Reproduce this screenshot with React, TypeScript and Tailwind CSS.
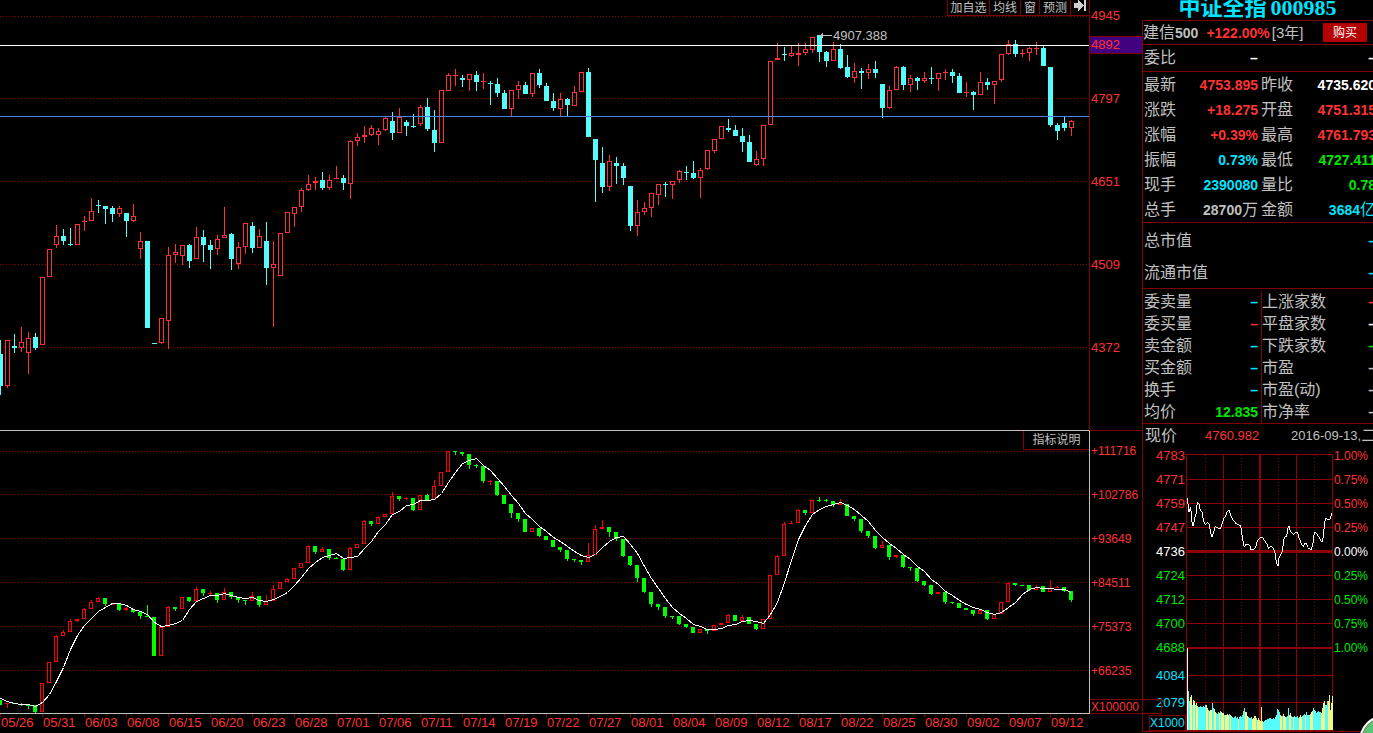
import React from 'react';

type Candle = { up: boolean; high: number; top: number; bottom: number; low: number };

const parse = (rows: string): Candle[] =>
  rows
    .trim()
    .split(/\s+/)
    .map((row) => {
      const [high, top, bottom, low] = row.slice(1).split(',').map(Number);
      return { up: row[0] === 'u', high, top, bottom, low };
    });

// u = rising, d = falling; high, body top, body bottom, low on the pane's vertical scale
const PRICE = parse(`
d340,354,386,395 u340,340,386,388 d334,346,348,353 u327,342,348,352 u332,338,353,374 d333,337,348,350
u277,277,345,345 u249,249,277,277 u225,236,245,248 d229,236,241,245 d228,244,245,246 u224,224,245,245
u216,221,222,231 u198,211,221,221 d200,205,206,213 d206,206,209,224 d206,208,214,222 u206,208,214,217
d213,213,221,237 u204,216,221,222 u232,241,249,259 d241,241,328,328 d343,343,344,344 u318,318,343,344
u247,255,321,349 u244,252,255,263 u245,245,256,265 d244,245,261,268 u227,237,259,259 d230,237,245,262
d240,245,250,269 u235,239,249,255 u207,235,238,238 d233,234,259,270 u242,247,264,269 u223,223,247,254
d222,226,248,253 u229,236,248,248 d222,241,268,285 u241,264,268,327 u233,233,276,276 u212,212,233,233
u207,207,214,227 u188,190,207,212 u175,184,190,191 u177,181,183,190 d172,180,188,190 u175,180,188,190
u166,178,179,179 d175,178,183,190 u140,141,184,199 u133,137,141,146 u126,135,137,143 u125,128,135,136
u128,131,135,145 u117,118,130,131 d112,121,133,140 u108,117,133,133 d120,122,126,136 d114,126,127,128
u105,107,124,126 d98,107,129,131 d110,130,143,152 u90,90,143,143 u73,75,91,91 u69,75,76,86
d75,78,80,87 u74,74,80,91 d71,75,82,91 u73,81,82,89 d81,83,84,105 d78,84,93,97
d90,93,109,109 u90,90,109,116 u81,85,90,99 d82,85,94,94 u73,73,94,97 d69,73,85,88
d83,86,101,101 d93,101,108,111 u93,99,109,116 d98,99,105,116 u86,92,106,106 u72,72,92,92
d68,72,137,137 d139,139,160,202 d147,163,187,193 u155,161,187,191 d157,163,166,184 d163,166,178,185
d186,186,226,231 u200,212,226,236 u202,208,212,215 u193,193,208,217 u184,184,195,205 d182,184,185,197
u181,181,185,199 u170,171,180,183 d166,172,173,180 d161,173,178,179 u168,170,178,198 u150,150,169,170
u139,139,151,153 u126,126,139,139 d119,128,130,132 d125,130,136,136 d128,136,142,152 d135,142,162,162
u151,159,165,166 u125,125,159,166 u61,61,125,125 u43,58,60,60 d47,54,55,61 u46,53,56,57
u43,53,55,66 u43,49,53,55 u37,37,50,53 d35,35,52,62 d51,52,61,67 u42,49,61,61
d44,49,68,69 d55,67,77,78 u63,71,78,83 d68,71,73,89 u64,69,73,79 d61,69,73,78
d84,84,108,118 u86,90,108,109 u66,67,90,90 d66,67,85,90 u75,78,85,92 d77,78,81,90
u72,78,81,83 d67,78,79,84 u73,73,79,91 u69,72,73,80 d69,72,76,83 d73,76,93,93
u82,92,93,97 d91,92,95,110 u72,82,95,95 d78,82,85,90 u81,81,85,104 u54,54,80,82
u40,44,54,55 d40,44,54,57 u49,53,54,57 u47,48,53,61 u42,48,49,55 d46,48,66,66
d67,67,125,127 d123,125,131,140 d117,123,128,131 u120,121,128,136
`);

const INDICATOR = parse(`
d700,700,705,705 u703,703,704,708 d703,703,704,704 d703,704,705,706 d705,705,706,709 d705,705,712,713
u683,683,712,712 u662,662,683,683 u635,636,662,662 u630,632,636,636 u619,621,632,632 u619,619,621,622
u608,609,619,619 u600,602,609,609 u597,598,602,602 d598,598,604,606 u603,604,605,605 d604,604,610,611
u607,608,610,611 d609,609,612,613 d612,612,616,619 d605,616,617,617 d617,617,656,656 u627,627,656,656
u606,607,627,627 d607,607,609,611 u597,597,609,609 d597,597,601,602 u587,589,601,601 d589,589,593,596
u591,593,594,595 d593,593,600,603 u588,592,600,600 d592,592,597,599 d597,597,600,603 d600,600,601,605
u592,596,601,601 d596,596,605,607 u595,601,605,605 u585,589,601,601 u582,582,589,589 u578,579,582,582
u568,568,579,579 u563,563,568,568 u545,546,563,563 d546,546,552,554 u547,549,552,552 d549,549,558,560
d557,558,559,559 d559,559,570,571 u547,548,570,570 u544,544,548,548 u520,521,544,544 d521,521,524,526
u516,517,524,524 u514,514,517,517 u492,496,514,514 d496,496,499,501 u497,498,499,500 d498,498,510,511
u495,495,510,510 d494,495,500,501 u480,486,500,500 u472,472,486,486 u451,451,472,472 d451,451,452,455
d452,452,454,456 d454,454,465,469 d464,465,466,468 d466,466,481,483 u480,481,482,485 d481,481,495,496
d495,495,504,504 d504,504,513,518 d513,513,519,522 d519,519,532,532 u528,528,532,532 d528,528,536,537
d536,536,540,540 d540,540,547,547 d547,547,550,552 d550,550,559,561 d559,559,560,562 d560,560,562,565
u543,555,562,562 u525,529,555,555 u520,527,529,529 d527,527,532,537 d532,532,539,541 d539,539,556,557
d556,556,565,566 d565,565,578,582 d578,578,592,593 d592,592,604,607 d604,604,607,610 d607,607,616,618
d616,616,617,619 d616,616,624,625 d624,624,627,628 d627,627,633,633 u629,629,633,633 d629,629,631,634
u625,625,631,631 u623,623,625,625 u614,615,623,623 d615,615,621,621 u615,617,621,621 d617,617,624,624
d624,624,629,630 u619,619,629,629 u575,575,619,619 u555,556,575,575 u522,524,556,556 u521,523,524,524
u509,510,523,523 d510,510,513,515 u500,500,513,513 d497,500,501,502 d499,500,501,502 d501,501,505,507
u499,503,505,505 d504,504,516,516 d516,516,519,521 d519,519,531,533 d531,531,536,538 d536,536,548,549
u541,545,548,548 d545,545,557,560 u555,555,557,558 d555,555,567,568 d567,567,568,571 d568,568,581,582
d581,581,585,586 d585,585,594,595 u592,592,594,594 d592,592,602,604 d602,602,603,604 d603,603,608,608
d608,608,610,610 d610,610,614,616 u610,610,614,614 d610,610,619,620 u614,614,619,619 u602,602,614,614
u583,583,602,602 d583,583,585,586 d585,585,586,586 d585,585,590,591 u585,587,590,590 d586,586,592,592
u580,588,592,592 u586,587,588,588 d587,587,591,592 d591,591,600,602
`);

const AVERAGE = [
  698, 701, 703, 704, 704, 706, 702, 694, 681, 667, 649, 635, 625, 618, 611, 607, 603, 603, 605, 609, 611, 614,
  622, 626, 625, 623, 620, 609, 601, 598, 595, 595, 593, 595, 597, 598, 597, 600, 601, 599, 596, 592, 585, 577,
  568, 562, 557, 555, 553, 558, 557, 556, 548, 541, 531, 524, 514, 511, 505, 504, 500, 500, 499, 493, 482, 472,
  463, 460, 458, 465, 470, 478, 486, 495, 503, 513, 519, 526, 531, 537, 541, 546, 551, 555, 557, 554, 547, 541,
  537, 536, 544, 553, 566, 578, 588, 598, 607, 613, 618, 624, 626, 629, 629, 628, 625, 624, 621, 620, 621, 623,
  614, 602, 582, 560, 539, 525, 514, 509, 506, 504, 502, 505, 509, 515, 521, 530, 537, 543, 548, 554, 559, 566,
  571, 579, 584, 591, 595, 600, 604, 607, 609, 612, 614, 612, 607, 602, 594, 589, 587, 588, 588, 589, 589, 592,
];

const STEP = 7;

const DATES = [
  '05/26', '05/31', '06/03', '06/08', '06/15', '06/20', '06/23', '06/28', '07/01', '07/06', '07/11', '07/14', '07/19',
  '07/22', '07/27', '08/01', '08/04', '08/09', '08/12', '08/17', '08/22', '08/25', '08/30', '09/02', '09/07', '09/12',
];

// Intraday trace, three units to one pixel
const TRACE =
  '142,220 147,260 152,247 157,300 160,303 164,280 168,268 172,232 177,238 181,255 186,262 191,290 196,298 203,293 208,298 211,318 216,337 221,322 225,305 232,308 241,312 246,298 252,280 257,272 263,257 267,254 271,268 279,285 288,296 302,303 305,320 308,345 313,366 318,358 325,357 331,366 333,374 343,373 348,362 352,346 358,340 366,337 373,345 381,357 386,372 390,366 397,366 401,373 405,385 409,412 414,423 417,400 422,388 427,380 431,345 436,335 440,335 443,310 448,303 451,320 460,328 467,322 473,323 478,342 484,355 490,366 494,354 499,355 503,367 513,375 518,362 522,330 526,320 533,330 541,345 547,352 551,325 553,300 557,278 564,285 570,283 576,265';

const VOLUME = [
  39, 29, 33, 35, 25, 30, 29, 25, 27, 24, 23, 23, 24, 23, 23, 24, 23, 25, 25, 22, 20, 19, 20, 20, 27, 22, 21, 18, 17,
  16, 18, 17, 19, 18, 17, 17, 15, 15, 15, 16, 15, 16, 15, 14, 13, 12, 13, 14, 12, 13, 11, 13, 14, 13, 15, 19, 22, 18,
  18, 14, 13, 12, 12, 13, 11, 12, 14, 14, 12, 10, 12, 10, 9, 23, 9, 8, 9, 10, 10, 11, 11, 12, 12, 11, 11, 12, 11, 13,
  15, 21, 20, 18, 15, 14, 14, 16, 14, 13, 13, 14, 22, 15, 17, 14, 13, 13, 14, 13, 13, 14, 12, 13, 15, 13, 14, 15, 16,
  15, 18, 15, 15, 15, 16, 18, 19, 22, 20, 19, 17, 18, 19, 18, 18, 17, 22, 27, 29, 25, 25, 29, 29, 35, 20, 27, 34,
];
const VOLUME_SIDE =
  'ccyycyycyyccccccccyycyyyccyycccycyyycyyyycycccccccyccccccyyyccccyyyycyyyyyycccccccccccccccccyycyyycccyyccycccccyyycccyccccyyyccccccccyyyycccyyyyy';

function Candles({ data, half, width, up, down }: { data: Candle[]; half: number; width: number; up: string; down: string }) {
  return (
    <g>
      {data.map((c, i) => {
        const x = i * STEP;
        const color = c.up ? up : down;
        const height = c.bottom - c.top;
        const hollow = c.up && height > 2;
        return (
          <g key={i}>
            {c.top > c.high && <rect x={x} y={c.high} width={1} height={c.top - c.high} fill={color} />}
            {c.low > c.bottom && <rect x={x} y={c.bottom} width={1} height={c.low - c.bottom} fill={color} />}
            {hollow ? (
              <rect x={x - half + 0.5} y={c.top + 0.5} width={width - 1} height={height - 1} fill="#000" stroke={color} />
            ) : (
              <rect x={x - half} y={c.top} width={width} height={height} fill={color} />
            )}
          </g>
        );
      })}
    </g>
  );
}

function GridLines({ rows }: { rows: number[] }) {
  return (
    <g stroke="#900000" strokeDasharray="1 2">
      {rows.map((y) => (
        <line key={y} x1={0} x2={1089} y1={y + 0.5} y2={y + 0.5} />
      ))}
    </g>
  );
}

const toolButton = 'h-4 shrink-0 cursor-pointer border-b border-l border-[#800000] bg-black text-xs leading-3 whitespace-nowrap text-[#c0c0c0]';

function PricePane() {
  return (
    <section className="relative h-[430px]">
      <svg className="block h-full w-full" viewBox="0 0 1089 430" preserveAspectRatio="none" shapeRendering="crispEdges" aria-label="K线">
        <GridLines rows={[16, 98, 181, 264, 347]} />
        <Candles data={PRICE} half={2} width={5} up="#ff3232" down="#54fcfc" />
        <rect x={0} y={45} width={1089} height={1} fill="#fff" />
        <rect x={0} y={116} width={1089} height={1} fill="#4882f0" />
        <path d="M819 35h2v-1h1v-1h1v2h9v1h-9v2h-1v-1h-1v-1h-2z" fill="#c0c0c0" />
      </svg>
      <span className="absolute top-[28px] left-[76.5%] text-[13px] leading-4 text-[#c0c0c0]">4907.388</span>
      <nav className="absolute top-0 right-0 flex">
        <button className={toolButton + ' w-[42px]'}>加自选</button>
        <button className={toolButton + ' w-[31px]'}>均线</button>
        <button className={toolButton + ' w-[19px]'}>窗</button>
        <button className={toolButton + ' w-[31px]'}>预测</button>
        <button className={toolButton + ' w-[19px]'} aria-label="下一个">
          <svg className="mx-auto -mt-1 block" width="13" height="11" viewBox="0 0 13 11" shapeRendering="crispEdges">
            <path d="M0 3h4V0l6 5.5L4 11V8H0zM10 0h2v11h-2z" fill="#d0d0d0" />
          </svg>
        </button>
      </nav>
    </section>
  );
}

function IndicatorPane() {
  return (
    <section className="relative h-[284px] border-y border-[#c0c0c0]">
      <svg className="block h-full w-full" viewBox="0 431 1089 282" preserveAspectRatio="none" shapeRendering="crispEdges" aria-label="指标">
        <GridLines rows={[451, 494, 538, 582, 626, 670]} />
        <Candles data={INDICATOR} half={2} width={4} up="#ff0000" down="#00ff00" />
        <polyline points={AVERAGE.map((y, i) => `${i * STEP + 0.5},${y + 0.5}`).join(' ')} fill="none" stroke="#fff" />
      </svg>
      <button className="absolute top-0 right-0 h-[19px] w-[66px] border-b border-l border-[#800000] bg-black text-xs leading-[18px] text-[#c0c0c0]">
        指标说明
      </button>
    </section>
  );
}

function DateAxis() {
  return (
    <ol className="grid h-[19px] grid-cols-[repeat(26,3.8568%)] overflow-hidden text-[13px] leading-[18px] text-[#ff3232]">
      {DATES.map((d) => (
        <li key={d} className="relative pl-px before:absolute before:top-0 before:left-0 before:h-[3px] before:w-px before:bg-[#800000]">
          {d}
        </li>
      ))}
    </ol>
  );
}

function ScaleColumn() {
  return (
    <aside className="relative z-10 text-[#ff3232]">
      <div className="relative h-[430px] border-l border-[#800000] pt-2 pl-px text-[13px] leading-4">
        {['4945', '4797', '4651', '4509', '4372'].map((v) => (
          <div key={v} className="h-[83px]">{v}</div>
        ))}
        <div className="absolute top-9 right-0 left-0 h-[18px] border-y border-[#800000] bg-[#400080] pl-px">4892</div>
      </div>
      <div className="relative h-[284px] border-t border-l border-t-[#800000] border-l-[#c0c0c0] pt-3 pl-px text-xs leading-4">
        {['+111716', '+102786', '+93649', '+84511', '+75373', '+66235'].map((v) => (
          <div key={v} className="h-11">{v}</div>
        ))}
        <div className="absolute bottom-0 left-0 h-[15px] w-[72px] border border-l-0 border-[#800000] pl-px leading-[14px]">X100000</div>
      </div>
    </aside>
  );
}

const RED = 'text-[#ff3232]';
const CYAN = 'text-[#00e4ff]';
const GREEN = 'text-[#00e600]';
const WHITE = 'text-white';
const GREY = 'text-[#c0c0c0]';

type Cell = [label: string, value: string, color: string, unit?: string];

const QUOTES: [Cell, Cell][] = [
  [['最新', '4753.895', RED], ['昨收', '4735.620', WHITE]],
  [['涨跌', '+18.275', RED], ['开盘', '4751.315', RED]],
  [['涨幅', '+0.39%', RED], ['最高', '4761.793', RED]],
  [['振幅', '0.73%', CYAN], ['最低', '4727.411', GREEN]],
  [['现手', '2390080', CYAN], ['量比', '0.78', GREEN]],
  [['总手', '28700', GREY, '万'], ['金额', '3684', CYAN, '亿']],
];

const STATS: [Cell, Cell][] = [
  [['委卖量', '–', CYAN], ['上涨家数', '–', RED]],
  [['委买量', '–', RED], ['平盘家数', '–', WHITE]],
  [['卖金额', '–', CYAN], ['下跌家数', '–', GREEN]],
  [['买金额', '–', CYAN], ['市盈', '–', GREY]],
  [['换手', '–', CYAN], ['市盈(动)', '–', GREY]],
  [['均价', '12.835', GREEN], ['市净率', '–', GREY]],
];

function Value({ cell }: { cell: Cell }) {
  return (
    <td className={'p-0 pr-px text-right text-sm font-bold ' + cell[2]}>
      {cell[1]}
      {cell[3] && <span className="text-base leading-none font-normal">{cell[3]}</span>}
    </td>
  );
}

function Pairs({ rows, rowClass, divider }: { rows: [Cell, Cell][]; rowClass: string; divider?: boolean }) {
  return (
    <table className="w-[233px] table-fixed border-collapse">
      <colgroup>
        <col className="w-[52px]" />
        <col className="w-[64px]" />
        <col className="w-[76px]" />
        <col className="w-[41px]" />
      </colgroup>
      <tbody>
        {rows.map(([a, b]) => (
          <tr key={a[0]} className={rowClass}>
            <th className="p-0 pl-px text-left font-normal whitespace-nowrap">{a[0]}</th>
            <Value cell={a} />
            <td colSpan={2} className="p-0 pl-[2px]">
              <div className={'flex items-center justify-between ' + rowClass + (divider ? ' border-l border-[#800000]' : '')}>
                <span>{b[0]}</span>
                <span className={'text-sm font-bold whitespace-nowrap ' + b[2]}>
                  {b[1]}
                  {b[3] && <span className="text-base leading-none font-normal">{b[3]}</span>}
                </span>
              </div>
            </td>
          </tr>
        ))}
      </tbody>
    </table>
  );
}

const LEFT_SCALE: [string, string][] = [
  ['4783', RED], ['4771', RED], ['4759', RED], ['4747', RED], ['4736', WHITE], ['4724', GREEN], ['4712', GREEN], ['4700', GREEN], ['4688', GREEN],
];
const RIGHT_SCALE: [string, string][] = [
  ['1.00%', RED], ['0.75%', RED], ['0.50%', RED], ['0.25%', RED], ['0.00%', WHITE], ['0.25%', GREEN], ['0.50%', GREEN], ['0.75%', GREEN], ['1.00%', GREEN],
];

function Intraday() {
  return (
    <div className="grid grid-cols-[43px_147px_1fr] text-[13px] leading-4">
      <div className="pt-px text-right">
        {LEFT_SCALE.map(([v, c]) => (
          <div key={v} className={'h-6 pr-px ' + c}>{v}</div>
        ))}
        <div className={'mt-1 h-[27px] pr-px ' + CYAN}>4084</div>
        <div className={'h-5 pr-px ' + CYAN}>2079</div>
        <div className={'ml-1.5 h-4 border border-[#800000] pr-px text-xs leading-[14px] ' + CYAN}>X1000</div>
      </div>
      <svg className="mt-[7px] block h-[277px] w-full" viewBox="0 0 147 277" shapeRendering="crispEdges" aria-label="分时">
        <g fill="#900000">
          {[0, 25, 49, 73, 121, 145, 169, 221, 248, 276].map((y) => (
            <rect key={y} x={0} y={y} width={147} height={1} />
          ))}
          <rect x={0} y={96} width={147} height={3} />
          <rect x={0} y={193} width={147} height={2} />
          {[0, 37, 110, 146].map((x) => (
            <rect key={x} x={x} y={0} width={1} height={277} />
          ))}
          <rect x={73} y={0} width={2} height={277} />
        </g>
        <g stroke="#900000" strokeDasharray="1 2">
          {[19, 55, 92, 128].map((x) => (
            <line key={x} x1={x + 0.5} x2={x + 0.5} y1={1} y2={277} />
          ))}
        </g>
        {VOLUME.map((h, i) => (
          <rect key={i} x={i + 2} y={276 - h} width={1} height={h} fill={VOLUME_SIDE[i] === 'c' ? '#54fcfc' : '#f0f888'} />
        ))}
        <rect x={1} y={194} width={1} height={82} fill="#fff" />
        <g transform="translate(-46 -29) scale(0.33333)">
          <polyline points={TRACE} fill="none" stroke="#fff" strokeWidth={3} />
        </g>
      </svg>
      <div className="pt-px pl-px text-xs leading-4">
        {RIGHT_SCALE.map(([v, c], i) => (
          <div key={i} className={'h-6 ' + c}>{v}</div>
        ))}
      </div>
    </div>
  );
}

function QuotePanel() {
  return (
    <aside className="overflow-hidden text-base leading-5 text-[#c0c0c0]">
      <h1 className="mb-1 flex h-4 items-center justify-center gap-1 text-[22px] leading-4 font-bold whitespace-nowrap text-[#00e4ff]">
        <span>中证全指</span>
        <span className="font-['Liberation_Serif',serif]">000985</span>
      </h1>
      <div className="h-[712px] border-y border-l border-[#800000]">
        <div className="flex h-[23px] items-center whitespace-nowrap">
          <span>建信</span>
          <b className="text-sm">500</b>
          <b className={'ml-2 text-sm ' + RED}>+122.00%</b>
          <span className="ml-0.5 text-[15px]">[3年]</span>
          <button className="ml-auto mr-1.5 h-[19px] w-11 bg-[#b40000] text-xs leading-4 text-white">购买</button>
        </div>
        <div className="flex h-[27px] w-[233px] items-center border-t border-[#800000] pl-px">
          <span className="w-[106px]">委比</span>
          <span className="text-sm font-bold text-white">–</span>
          <span className="ml-auto text-sm font-bold text-white">–</span>
        </div>
        <div className="h-[151px] border-t border-[#800000]">
          <Pairs rows={QUOTES} rowClass="h-[25px]" />
        </div>
        <dl className="h-[66px] w-[233px] border-t border-[#800000] pt-[2px]">
          {['总市值', '流通市值'].map((label) => (
            <div key={label} className="flex h-8 items-center justify-between pl-px">
              <dt>{label}</dt>
              <dd className={'text-sm font-bold ' + CYAN}>–</dd>
            </div>
          ))}
        </dl>
        <div className="h-[135px] border-t border-[#800000] pt-[2px]">
          <Pairs rows={STATS} rowClass="h-[22px]" divider />
        </div>
        <div className="flex h-6 w-[246px] items-center justify-between border-t border-[#800000] pt-px pl-0.5 whitespace-nowrap">
          <span className="w-[60px]">现价</span>
          <span className={'w-[86px] text-[13px] ' + RED}>4760.982</span>
          <span className="flex flex-1 items-center text-[13px]">
            2016-09-13,<span className="text-base">二</span>
          </span>
        </div>
        <Intraday />
      </div>
    </aside>
  );
}

export default function App() {
  return (
    <main className="relative grid min-h-screen grid-cols-[minmax(0,1fr)_53px_231px] items-start overflow-hidden bg-black font-['Liberation_Sans','Noto_Sans_CJK_SC',sans-serif]">
      <div className="min-w-0">
        <PricePane />
        <IndicatorPane />
        <DateAxis />
      </div>
      <ScaleColumn />
      <QuotePanel />
      <div className="absolute -right-[38px] -bottom-[34px] z-20 size-[52px] rounded-full border-2 border-white bg-[#5cc46c] ring-1 ring-[#777] ring-inset" />
    </main>
  );
}
